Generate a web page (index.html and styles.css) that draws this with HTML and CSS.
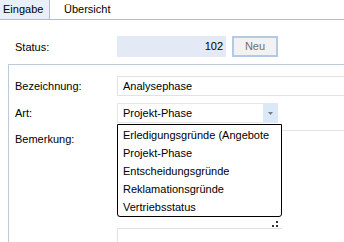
FILE: index.html
```html
<!DOCTYPE html>
<html>
<head>
<meta charset="utf-8">
<link rel="stylesheet" href="styles.css">
</head>
<body>
<div class="tabs">
  <div class="tab active">Eingabe</div>
  <div class="tab">Übersicht</div>
</div>
<div class="status-row">
  <div class="label">Status:</div>
  <div class="status-field">102</div>
  <div class="btn">Neu</div>
</div>
<div class="group">
  <div class="row">
    <div class="label">Bezeichnung:</div>
    <div class="input">Analysephase</div>
  </div>
  <div class="row">
    <div class="label">Art:</div>
    <div class="combo">
      <span class="combo-text">Projekt-Phase</span>
      <span class="combo-btn"><svg width="5" height="3" viewBox="0 0 5 3"><path d="M0 0H5L2.5 3Z" fill="#7c7c7c"/></svg></span>
    </div>
  </div>
  <div class="row row-memo">
    <div class="label label-top">Bemerkung:</div>
    <div class="memo"></div>
  </div>
</div>
<div class="popup">
  <ul class="list">
    <li>Erledigungsgründe (Angebote</li>
    <li>Projekt-Phase</li>
    <li>Entscheidungsgründe</li>
    <li>Reklamationsgründe</li>
    <li>Vertriebsstatus</li>
  </ul>
  <div class="grip"><svg width="8" height="8" viewBox="0 0 8 8"><rect x="5" y="1" width="2" height="2" fill="#333"/><rect x="1" y="5" width="2" height="2" fill="#333"/><rect x="5" y="5" width="2" height="2" fill="#333"/></svg></div>
</div>
</body>
</html>
```

FILE: styles.css
```css
html, body {
  margin: 0;
  padding: 0;
  background: #fff;
  overflow: hidden;
}
body {
  font-family: "Liberation Sans", Arial, sans-serif;
  font-size: 11px;
  color: #000;
  position: relative;
  width: 344px;
  height: 242px;
}
.tabs {
  display: flex;
  height: 19px;
  border-bottom: 1px solid #a4bde2;
}
.tab {
  line-height: 19px;
  padding: 0 14px;
}
.tab.active {
  width: 50px;
  box-sizing: border-box;
  padding: 0 0 0 3px;
  background: #e8eff9;
  border-right: 1px solid #a4bde2;
}
.status-row {
  display: flex;
  align-items: center;
  margin-top: 16px;
  padding-left: 15px;
}
.label {
  width: 102px;
  flex: none;
}
.status-field {
  width: 109px;
  height: 21px;
  box-sizing: border-box;
  background: #e3e9f5;
  text-align: right;
  line-height: 21px;
  padding-right: 3px;
}
.btn {
  margin-left: 6px;
  width: 46px;
  height: 21px;
  box-sizing: border-box;
  border: 2px solid #b5c9e5;
  background: #f2f2f2;
  color: #707070;
  text-align: center;
  line-height: 17px;
}
.group {
  margin-top: 7px;
  margin-left: 8px;
  border-top: 1px solid #bccbda;
  border-left: 1px solid #bccbda;
  padding: 11px 0 0 6px;
  height: 166px;
  overflow: hidden;
}
.row {
  display: flex;
  align-items: center;
  margin-bottom: 7px;
}
.input {
  flex: 1;
  height: 20px;
  box-sizing: border-box;
  border: 1px solid #e2e2e2;
  border-right: none;
  line-height: 18px;
  padding-left: 5px;
}
.combo {
  width: 161px;
  flex: none;
  height: 20px;
  display: flex;
  box-sizing: border-box;
  border: 1px solid #e6e6e6;
}
.combo-text {
  flex: 1;
  line-height: 18px;
  padding-left: 5px;
}
.combo-btn {
  width: 15px;
  background: #dbe8f8;
  display: flex;
  align-items: center;
  justify-content: center;
  margin: -1px -1px -1px 0;
}
.row-memo {
  align-items: flex-start;
  margin-bottom: 0;
}
.label-top {
  padding-top: 3px;
}
.memo {
  flex: 1;
  height: 112px;
  border-top: 1px solid #e2e2e2;
  border-left: 1px solid #e2e2e2;
}
.popup {
  position: absolute;
  left: 117px;
  top: 124px;
  width: 165px;
}
.list {
  list-style: none;
  margin: 0;
  padding: 1px 0 0 0;
  border: 1px solid #000;
  border-radius: 0 0 3px 3px;
  background: #fff;
}
.list li {
  height: 18px;
  line-height: 18px;
  padding-left: 5px;
  white-space: nowrap;
}
.grip {
  height: 11px;
  background: #fff;
  border-bottom: 1px solid #e0e0e0;
  display: flex;
  justify-content: flex-end;
  align-items: flex-end;
  padding-right: 3px;
}
.grip svg {
  display: block;
}
```
